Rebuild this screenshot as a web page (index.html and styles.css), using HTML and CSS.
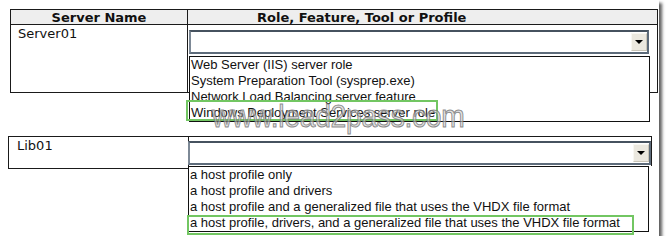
FILE: index.html
```html
<!DOCTYPE html>
<html>
<head>
<meta charset="utf-8">
<link rel="stylesheet" href="styles.css">
</head>
<body>
<div class="frame">
  <div class="table t1">
    <div class="hd c1">Server Name</div>
    <div class="hd c2 hd-role">Role, Feature, Tool or Profile</div>
    <div class="cell c1 name">Server01</div>
    <div class="cell c2 pick-cell">
      <div class="select"><span class="btn"><span class="tri"></span></span></div>
      <ul class="list list1">
        <li>Web Server (IIS) server role</li>
        <li>System Preparation Tool (sysprep.exe)</li>
        <li>Network Load Balancing server feature</li>
        <li>Windows Deployment Services server role</li>
        <li class="hl hl1"></li>
      </ul>
    </div>
  </div>

  <div class="table t2">
    <div class="cell c1 name lib">Lib01</div>
    <div class="cell c2 pick-cell2">
      <div class="select select2"><span class="btn"><span class="tri"></span></span></div>
      <ul class="list list2">
        <li>a host profile only</li>
        <li>a host profile and drivers</li>
        <li>a host profile and a generalized file that uses the VHDX file format</li>
        <li>a host profile, drivers, and a generalized file that uses the VHDX file format</li>
        <li class="hl hl2"></li>
      </ul>
    </div>
  </div>

  <div class="watermark">www.lead2pass.com</div>
</div>
</body>
</html>
```

FILE: styles.css
```css
html, body {
  margin: 0;
  padding: 0;
  background: #ffffff;
}

.frame {
  position: relative;
  width: 659px;
  height: 236px;
  background: #ffffff;
  box-shadow: 3px 3px 3px rgba(40, 40, 40, 0.75);
  padding-top: 9px;
  box-sizing: border-box;
  font-family: "DejaVu Sans", Verdana, sans-serif;
  color: #111;
}

.table {
  display: grid;
  border: 1px solid #1a1a1a;
  box-sizing: border-box;
}

.t1 {
  margin-left: 10px;
  width: 648px;
  grid-template-columns: 177px 1fr;
  grid-template-rows: 15px 67px;
}

.hd {
  background: #eeeeee;
  border-bottom: 1px solid #1a1a1a;
  font-weight: bold;
  font-size: 13px;
  line-height: 15px;
  white-space: nowrap;
}

.hd.c1 {
  text-align: center;
  border-right: 1px solid #1a1a1a;
}

.hd-role {
  padding-left: 69px;
}

.cell.c1 {
  border-right: 1px solid #1a1a1a;
}

.name {
  font-size: 13px;
  line-height: 15px;
  padding-left: 7px;
  padding-top: 1px;
}

.pick-cell {
  position: relative;
}

.select {
  margin-top: 5px;
  margin-left: 1px;
  width: 460px;
  height: 24px;
  box-sizing: border-box;
  border: 2px solid #5d6b7a;
  border-top-color: #46525f;
  border-left-color: #7d8996;
  background: #ffffff;
  display: flex;
  justify-content: flex-end;
  align-items: center;
}

.btn {
  width: 16px;
  height: 18px;
  background: #ebe8df;
  border: 1px solid #f8f7f2;
  border-right-color: #c9c5b8;
  border-bottom-color: #c9c5b8;
  box-sizing: border-box;
  display: flex;
  align-items: center;
  justify-content: center;
}

.tri {
  width: 0;
  height: 0;
  border-left: 4px solid transparent;
  border-right: 4px solid transparent;
  border-top: 4px solid #000;
}

.list {
  position: absolute;
  margin: 0;
  padding: 0;
  list-style: none;
  background: #ffffff;
  border: 1px solid #111;
  font-family: "Liberation Sans", Arial, sans-serif;
  font-size: 13px;
  line-height: 16px;
  color: #111;
  white-space: nowrap;
  z-index: 2;
}

.list li {
  padding-left: 1px;
}

.list1 {
  left: 1px;
  top: 31px;
  width: 459px;
}

.hl {
  position: absolute;
  border: 2px solid #72c662;
  box-sizing: border-box;
}

.hl1 {
  left: -4px;
  top: 43px;
  width: 252px;
  height: 21px;
}

.t2 {
  margin-top: 43px;
  margin-left: 8px;
  width: 644px;
  border: none;
  grid-template-columns: 181px 463px;
  grid-template-rows: 33px;
}

.t2 .cell.c1 {
  border: 1px solid #1a1a1a;
}

.lib {
  padding-top: 1px;
  padding-left: 8px;
}

.pick-cell2 {
  position: relative;
  border-top: 1px solid #1a1a1a;
  border-right: 1px solid #1a1a1a;
  height: 29px;
}

.select2 {
  margin-top: 4px;
  margin-left: -1px;
  width: 463px;
}

.list2 {
  left: -1px;
  top: 29px;
  width: 459px;
}

.hl2 {
  left: -2px;
  top: 48px;
  width: 447px;
  height: 20px;
}

.watermark {
  position: absolute;
  left: 212px;
  top: 101px;
  font-family: "Liberation Sans", Arial, sans-serif;
  font-size: 31px;
  line-height: 31px;
  letter-spacing: -0.3px;
  color: rgba(205, 205, 205, 0.6);
  -webkit-text-stroke: 1px rgba(115, 115, 115, 0.8);
  transform: scaleX(0.91);
  transform-origin: left top;
  white-space: nowrap;
  z-index: 3;
}
```
